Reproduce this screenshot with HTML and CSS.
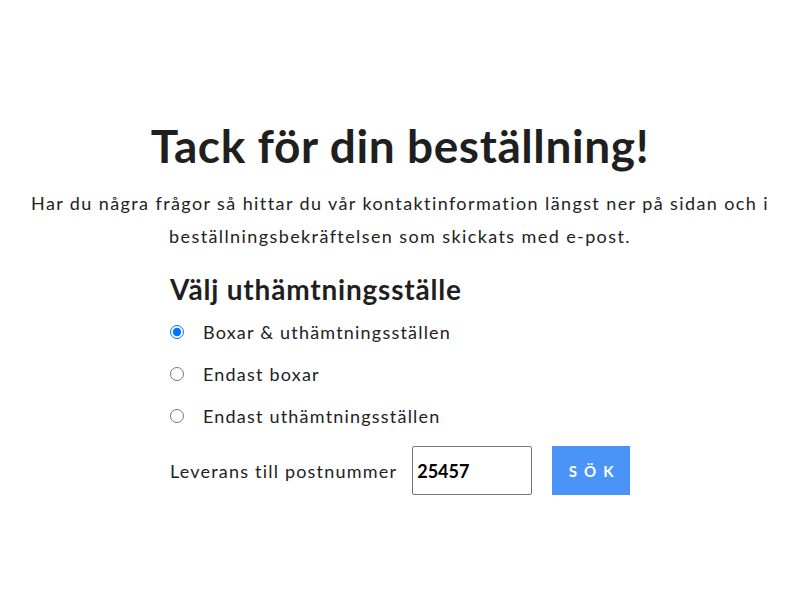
FILE: index.html
```html
<!DOCTYPE html>
<html lang="sv">
<head>
<meta charset="utf-8">
<link rel="stylesheet" href="styles.css">
</head>
<body>
<main class="page">
  <h1 class="title">Tack för din beställning!</h1>
  <p class="intro">Har du några frågor så hittar du vår kontaktinformation längst ner på sidan och i beställningsbekräftelsen som skickats med e-post.</p>
  <section class="pickup">
    <h2 class="pickup-title">Välj uthämtningsställe</h2>
    <label class="option"><input type="radio" name="typ" checked><span>Boxar &amp; uthämtningsställen</span></label>
    <label class="option"><input type="radio" name="typ"><span>Endast boxar</span></label>
    <label class="option"><input type="radio" name="typ"><span>Endast uthämtningsställen</span></label>
    <div class="zip-row">
      <span class="zip-label">Leverans till postnummer</span>
      <input class="zip-input" type="text" value="25457">
      <button class="search-btn">SÖK</button>
    </div>
  </section>
</main>
</body>
</html>
```

FILE: styles.css
```css
html, body {
  margin: 0;
  padding: 0;
  background: #fff;
}
body {
  font-family: "Lato", "DejaVu Sans", sans-serif;
  color: #222;
}
.page {
  padding-top: 116px;
  text-align: center;
}
.title {
  margin: 0;
  font-size: 46px;
  font-weight: 700;
  line-height: 60px;
  letter-spacing: 0.6px;
  color: #1f1f1f;
}
.intro {
  margin: 11px auto 0;
  max-width: 760px;
  font-size: 18px;
  line-height: 33px;
  letter-spacing: 1.4px;
}
.pickup {
  width: 460px;
  margin: 16px auto 0;
  text-align: left;
}
.pickup-title {
  margin: 0 0 2px;
  font-size: 28px;
  font-weight: 700;
  line-height: 40px;
  letter-spacing: 0.8px;
  color: #1f1f1f;
}
.option {
  display: flex;
  align-items: center;
  gap: 19px;
  height: 42px;
  font-size: 18px;
  letter-spacing: 1.2px;
}
.option input {
  margin: 0;
  width: 14px;
  height: 14px;
}
.zip-row {
  display: flex;
  align-items: center;
  margin-top: 9px;
  font-size: 18px;
}
.zip-label {
  margin-right: 15px;
  letter-spacing: 1.2px;
  white-space: nowrap;
}
.zip-input {
  box-sizing: border-box;
  width: 120px;
  height: 49px;
  border: 1px solid #767676;
  border-radius: 2px;
  padding: 0 4px;
  font-family: inherit;
  font-size: 18px;
  font-weight: 700;
  color: #000;
}
.search-btn {
  box-sizing: border-box;
  margin-left: 20px;
  width: 82px;
  height: 49px;
  border: 0;
  background: #4a94f8;
  color: #fff;
  font-family: inherit;
  font-size: 15px;
  font-weight: 700;
  letter-spacing: 7px;
  padding: 0 0 0 7px;
}
```
